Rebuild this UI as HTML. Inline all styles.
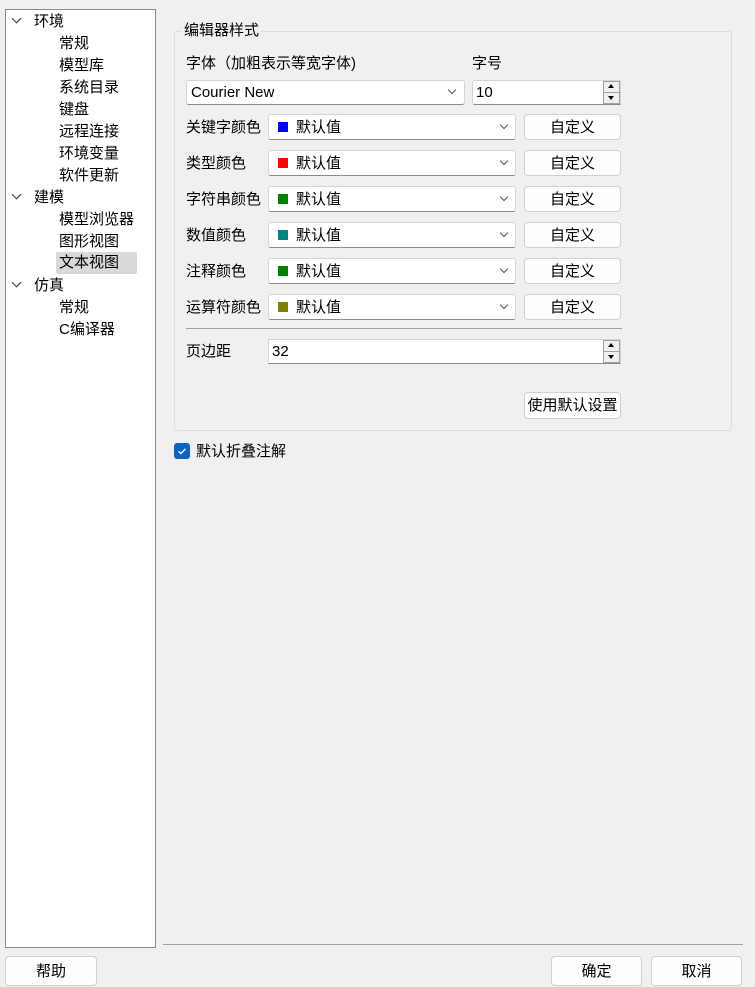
<!DOCTYPE html>
<html><head><meta charset="utf-8"><style>
*{box-sizing:border-box;margin:0;padding:0}
body{width:755px;height:978px;background:#f0f0f0;font-family:"Liberation Sans","Noto Sans CJK SC",sans-serif;font-size:15px;color:#000;position:relative;overflow:hidden}
.a{position:absolute;white-space:nowrap;line-height:22px}
.tree{position:absolute;left:5px;top:9px;width:151px;height:939px;background:#fff;border:1px solid #8a8a8a}
.chev{position:absolute;width:7px;height:7px;border-right:1.3px solid #333;border-bottom:1.3px solid #333;transform:rotate(45deg)}
.box{position:absolute;background:#fff;border:1px solid #d5d5d5;border-bottom:1px solid #8a8a8a;border-radius:3px}
.dd{position:absolute;width:6px;height:6px;border-right:1px solid #555;border-bottom:1px solid #555;transform:rotate(45deg)}
.btn{position:absolute;background:#fdfdfd;border:1px solid #d0d0d0;border-radius:4px;text-align:center;line-height:26px}
.sw{position:absolute;width:10px;height:10px}
.sp{position:absolute;width:17px;border:1px solid #a0a0a0;background:#f0f0f0}
</style></head><body>
<div class="tree"></div>
<div class="chev" style="left:13px;top:15px"></div>
<div class="chev" style="left:13px;top:191px"></div>
<div class="chev" style="left:13px;top:279px"></div>
<div class="a" style="left:56px;top:252px;width:81px;height:22px;background:#d9d9d9;border-radius:2px"></div>
<div class="a" style="left:34px;top:11px">环境</div>
<div class="a" style="left:59px;top:33px">常规</div>
<div class="a" style="left:59px;top:55px">模型库</div>
<div class="a" style="left:59px;top:77px">系统目录</div>
<div class="a" style="left:59px;top:99px">键盘</div>
<div class="a" style="left:59px;top:121px">远程连接</div>
<div class="a" style="left:59px;top:143px">环境变量</div>
<div class="a" style="left:59px;top:165px">软件更新</div>
<div class="a" style="left:34px;top:187px">建模</div>
<div class="a" style="left:59px;top:209px">模型浏览器</div>
<div class="a" style="left:59px;top:231px">图形视图</div>
<div class="a" style="left:59px;top:252px">文本视图</div>
<div class="a" style="left:34px;top:275px">仿真</div>
<div class="a" style="left:59px;top:297px">常规</div>
<div class="a" style="left:59px;top:319px">C编译器</div>

<div class="a" style="left:174px;top:31px;width:558px;height:400px;border:1px solid #dcdcdc;border-radius:3px"></div>
<div class="a" style="left:182px;top:20px;padding:0 2px;background:#f0f0f0">编辑器样式</div>
<div class="a" style="left:186px;top:53px">字体（加粗表示等宽字体)</div>
<div class="a" style="left:472px;top:53px">字号</div>
<div class="box" style="left:186px;top:80px;width:279px;height:25px"></div>
<div class="a" style="left:191px;top:82px">Courier New</div>
<div class="dd" style="left:449px;top:87px"></div>
<div class="box" style="left:472px;top:80px;width:149px;height:25px;border-radius:3px 0 0 3px"></div>
<div class="a" style="left:476px;top:82px">10</div>
<div class="sp" style="left:603px;top:81px;height:12px"></div><div class="sp" style="left:603px;top:92px;height:12px"></div>
<div class="a" style="left:608px;top:84px;width:0;height:0;border:3.5px solid transparent;border-bottom:4px solid #000;border-top:0"></div>
<div class="a" style="left:608px;top:96px;width:0;height:0;border:3.5px solid transparent;border-top:4px solid #000;border-bottom:0"></div>

<div class="a" style="left:186px;top:117px">关键字颜色</div>
<div class="box" style="left:268px;top:114px;width:248px;height:26px"></div><div class="sw" style="left:278px;top:122px;background:#0000ff"></div><div class="a" style="left:296px;top:117px">默认值</div><div class="dd" style="left:501px;top:122px"></div><div class="btn" style="left:524px;top:114px;width:97px;height:26px">自定义</div>
<div class="a" style="left:186px;top:153px">类型颜色</div>
<div class="box" style="left:268px;top:150px;width:248px;height:26px"></div><div class="sw" style="left:278px;top:158px;background:#ff0000"></div><div class="a" style="left:296px;top:153px">默认值</div><div class="dd" style="left:501px;top:158px"></div><div class="btn" style="left:524px;top:150px;width:97px;height:26px">自定义</div>
<div class="a" style="left:186px;top:189px">字符串颜色</div>
<div class="box" style="left:268px;top:186px;width:248px;height:26px"></div><div class="sw" style="left:278px;top:194px;background:#008000"></div><div class="a" style="left:296px;top:189px">默认值</div><div class="dd" style="left:501px;top:194px"></div><div class="btn" style="left:524px;top:186px;width:97px;height:26px">自定义</div>
<div class="a" style="left:186px;top:225px">数值颜色</div>
<div class="box" style="left:268px;top:222px;width:248px;height:26px"></div><div class="sw" style="left:278px;top:230px;background:#008080"></div><div class="a" style="left:296px;top:225px">默认值</div><div class="dd" style="left:501px;top:230px"></div><div class="btn" style="left:524px;top:222px;width:97px;height:26px">自定义</div>
<div class="a" style="left:186px;top:261px">注释颜色</div>
<div class="box" style="left:268px;top:258px;width:248px;height:26px"></div><div class="sw" style="left:278px;top:266px;background:#008000"></div><div class="a" style="left:296px;top:261px">默认值</div><div class="dd" style="left:501px;top:266px"></div><div class="btn" style="left:524px;top:258px;width:97px;height:26px">自定义</div>
<div class="a" style="left:186px;top:297px">运算符颜色</div>
<div class="box" style="left:268px;top:294px;width:248px;height:26px"></div><div class="sw" style="left:278px;top:302px;background:#808000"></div><div class="a" style="left:296px;top:297px">默认值</div><div class="dd" style="left:501px;top:302px"></div><div class="btn" style="left:524px;top:294px;width:97px;height:26px">自定义</div>

<div class="a" style="left:186px;top:328px;width:436px;height:1px;background:#a0a0a0;line-height:1px"></div>
<div class="a" style="left:186px;top:341px">页边距</div>
<div class="box" style="left:268px;top:339px;width:353px;height:25px;border-radius:0"></div>
<div class="a" style="left:272px;top:341px">32</div>
<div class="sp" style="left:603px;top:340px;height:12px"></div><div class="sp" style="left:603px;top:351px;height:12px"></div>
<div class="a" style="left:608px;top:343px;width:0;height:0;border:3.5px solid transparent;border-bottom:4px solid #000;border-top:0"></div>
<div class="a" style="left:608px;top:355px;width:0;height:0;border:3.5px solid transparent;border-top:4px solid #000;border-bottom:0"></div>
<div class="btn" style="left:524px;top:392px;width:97px;height:27px">使用默认设置</div>

<div class="a" style="left:174px;top:443px;width:16px;height:16px;background:#0f63c0;border-radius:3px"></div>
<svg class="a" style="left:174px;top:443px" width="16" height="16"><path d="M4.5 8.3l2.4 2.3 4.6-4.8" stroke="#fff" stroke-width="1.3" fill="none"/></svg>
<div class="a" style="left:196px;top:441px">默认折叠注解</div>

<div class="a" style="left:163px;top:944px;width:580px;height:1px;background:#a0a0a0;line-height:1px"></div>
<div class="btn" style="left:5px;top:956px;width:92px;height:30px;line-height:30px">帮助</div>
<div class="btn" style="left:551px;top:956px;width:91px;height:30px;line-height:30px">确定</div>
<div class="btn" style="left:651px;top:956px;width:91px;height:30px;line-height:30px">取消</div>
</body></html>
